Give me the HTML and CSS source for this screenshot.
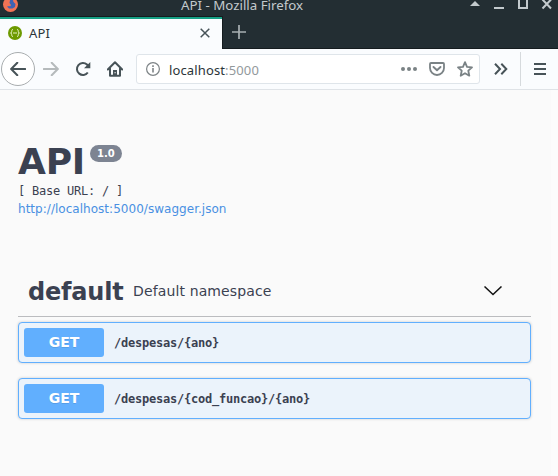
FILE: index.html
```html
<!DOCTYPE html>
<html lang="en">
<head>
<meta charset="utf-8">
<title>API</title>
<link rel="stylesheet" href="styles.css">
</head>
<body>
<div class="window">
  <header class="titlebar">
    <svg class="app-icon" width="16" height="16" viewBox="0 0 16 16"><circle cx="7.500" cy="4.5" r="7.500" fill="#f27355"/><path d="M7 0h3l.5 2 2 2-.5 3-2.500 1.500H6L4 6.500l2.500-.5L8 5 6.500 3z" fill="#3e63b4"/><path d="M5 5h3l-1 1.500z" fill="#f27355"/></svg>
    <span class="window-title">API - Mozilla Firefox</span>
    <svg class="controls" width="88" height="16" viewBox="-2 0 88 16"><path d="M-2 6l5-5 5 5z" fill="#c3cacd"/><path d="M22 8h10" stroke="#c3cacd" stroke-width="2"/><path d="M47-1h8v9h-8z" fill="none" stroke="#c3cacd" stroke-width="2"/><path d="M70.500-.5l8.500 9m0-9l-8.500 9" stroke="#c3cacd" stroke-width="2"/></svg>
  </header>
  <nav class="tabs">
    <div class="tab">
      <svg width="14" height="14" viewBox="0 0 14 14"><circle cx="7" cy="7" r="7" fill="#6d9a00"/><path d="M5 3.500q-1.300 0-1.300 1.300v1q0 1.200-1.200 1.200 1.200 0 1.200 1.200v1q0 1.300 1.300 1.300M9 3.500q1.300 0 1.300 1.300v1q0 1.200 1.200 1.200-1.200 0-1.200 1.200v1q0 1.300-1.300 1.300M5 7h4" fill="none" stroke="#e3f0bd" stroke-width="1"/></svg>
      <span>API</span>
      <svg class="close" width="10" height="10" viewBox="0 0 10 10"><path d="M.7.7l8.600 8.600m0-8.600L.7 9.300" stroke="#475358" stroke-width="1.500"/></svg>
    </div>
    <svg class="new-tab" width="14" height="14" viewBox="0 0 14 14"><path d="M7 0v14M0 7h14" stroke="#a8b0b3" stroke-width="1.700"/></svg>
  </nav>
  <div class="toolbar">
    <span class="back"><svg width="16" height="14" viewBox="0 0 16 14"><path d="M15.200 7H1.500M7.300.8L1.200 7l6.100 6.200" fill="none" stroke="#475358" stroke-width="2" stroke-linecap="round"/></svg></span>
    <svg class="forward" width="16" height="14" viewBox="0 0 16 14"><path d="M.8 7h13.700M8.700.8L14.800 7l-6.100 6.200" fill="none" stroke="#b5babc" stroke-width="2" stroke-linecap="round"/></svg>
    <svg class="reload" width="16" height="16" viewBox="0 0 16 16"><path d="M12.800 11.500A6 6 0 1 1 12 3.500L14 5.800" fill="none" stroke="#475358" stroke-width="2"/><path d="M15.300 1v6.300H9z" fill="#475358"/></svg>
    <svg class="home" width="16" height="16" viewBox="0 0 16 16"><path d="M.8 8.500L8 1.300l7.200 7.200M3 7.500v7.300h10V7.500" fill="none" stroke="#475358" stroke-width="2" stroke-linejoin="round" stroke-linecap="round"/><path d="M6 15V9h4v6z" fill="#475358"/><path d="M7.600 11h1v1.300h-1z" fill="#fff"/></svg>
    <div class="urlbar">
      <svg class="info" width="14" height="14" viewBox="0 0 14 14"><circle cx="7" cy="7" r="6.400" fill="none" stroke="#7d8386" stroke-width="1.200"/><path d="M7 6v4.500M7 3.300v1.700" stroke="#7d8386" stroke-width="1.600"/></svg>
      <span class="url">localhost<span class="port">:5000</span></span>
      <svg class="dots" width="16" height="4" viewBox="0 0 16 4"><g fill="#7a8285"><circle cx="2" cy="2" r="2"/><circle cx="8" cy="2" r="2"/><circle cx="14" cy="2" r="2"/></g></svg>
      <svg class="pocket" width="16" height="14" viewBox="0 0 16 14"><path d="M2 1h12q1 0 1 1v4a7 7 0 0 1-14 0V2q0-1 1-1z" fill="none" stroke="#7a8285" stroke-width="1.800"/><path d="M4.500 5L8 8.300 11.500 5" fill="none" stroke="#7a8285" stroke-width="1.900" stroke-linecap="round" stroke-linejoin="round"/></svg>
      <svg class="star" width="16" height="16" viewBox="0 0 16 16"><path d="M8 1.200l2 4.600 5 .5-3.700 3.400 1 5L8 12.200l-4.300 2.500 1-5L1 6.300l5-.5z" fill="none" stroke="#7a8285" stroke-width="1.800" stroke-linejoin="round"/></svg>
    </div>
    <svg class="more" width="14" height="12" viewBox="0 0 14 12"><path d="M1 .8L6 6l-5 5.200M7.300.8l5 5.200-5 5.200" fill="none" stroke="#475358" stroke-width="2"/></svg>
    <span class="divider"></span>
    <svg class="menu" width="12" height="12" viewBox="0 0 12 12"><path d="M0 1h12M0 6h12M0 11h12" stroke="#475358" stroke-width="2"/></svg>
  </div>
  <main class="page">
    <h1 class="title"><span class="name">API</span><span class="version">1.0</span></h1>
    <pre class="base">[ Base URL: / ]</pre>
    <a class="spec">http://localhost:5000/swagger.json</a>
    <h2 class="tag"><span class="tag-name">default</span><small>Default namespace</small>
      <svg width="18" height="10" viewBox="0 0 18 10"><path d="M.5.500L9 8.500l8.500-8" fill="none" stroke="#111" stroke-width="1.500"/></svg>
    </h2>
    <div class="operation"><span class="method">GET</span><span class="path">/despesas/{ano}</span></div>
    <div class="operation"><span class="method">GET</span><span class="path">/despesas/{cod_funcao}/{ano}</span></div>
  </main>
</div>
</body>
</html>
```
FILE: styles.css
```css
* { box-sizing: border-box; }
body { margin: 0; background: #fcfcfc; overflow: hidden; }
svg { display: block; flex: none; }
.window { width: 558px; height: 476px; overflow: hidden; font-family: "Noto Sans", sans-serif; }
.titlebar { display: flex; height: 16px; background: #232e33; }
.app-icon { margin-left: 3px; }
.window-title { width: 124px; margin-left: 162px; font-size: 13.3px; line-height: 10px; color: #c3cacd; white-space: nowrap; }
.controls { margin-left: auto; }
.tabs { display: flex; height: 33px; background: #232e33; border-bottom: 1px solid #151c1f; }
.tab { display: flex; align-items: center; width: 223px; height: 33px; padding: 0 12px 0 8px; background: #fafcfe; border-top: 1px solid #151c1f; border-right: 1px solid #151c1f; box-shadow: inset 0 2px #16a085; font-size: 13px; color: #2b3539; }
.tab span { margin-left: 7px; letter-spacing: .2px; }
.close { margin-left: auto; }
.new-tab { margin: 9px 0 0 9px; }
.toolbar { display: flex; align-items: center; height: 41px; padding-left: 1px; background: #fafcfe; border-bottom: 1px solid #dfe3e7; }
.back { display: flex; align-items: center; justify-content: center; width: 34px; height: 34px; border: 1px solid #a9adaf; border-radius: 50%; background: #fff; }
.forward { margin-left: 8px; }
.reload { margin-left: 16px; }
.home { margin-left: 16px; }
.urlbar { display: flex; align-items: center; width: 344px; height: 30px; margin-left: 13px; padding-left: 9px; background: #fff; border: 1px solid #dfe5ea; border-radius: 3px; }
.url { width: 92px; margin-left: 9px; padding-top: 1px; font-size: 13px; letter-spacing: .13px; color: #2b3539; white-space: nowrap; }
.port { color: #92999c; }
.dots { margin-left: 140px; }
.pocket { margin-left: 12px; }
.star { margin-left: 12px; }
.more { margin-left: 14px; }
.divider { width: 1px; height: 34px; margin-left: 12px; background: #d6dadd; }
.menu { margin-left: 13px; }
.page { width: 551px; height: 386px; padding: 50px 20px 0 18px; background: #fafafa; color: #3b4151; font-family: "DejaVu Sans", sans-serif; }
.title { display: flex; align-items: flex-start; height: 43px; margin: 0; font-size: 36px; line-height: 43px; }
.name { letter-spacing: -.2px; }
.version { height: 17px; margin: 5px 0 0 5px; padding: 0 7px; border-radius: 9px; background: #7d8492; color: #fff; font-size: 10px; line-height: 17px; }
.base { height: 16px; margin: 0; font: 12px/16px "DejaVu Sans Mono", monospace; letter-spacing: -.224px; }
.spec { display: block; height: 18px; padding-top: 1px; color: #4990e2; font-size: 12px; line-height: 18px; letter-spacing: .03px; }
.tag { display: flex; align-items: center; height: 50px; margin: 50px 0 5px; padding: 0 29px 0 10px; border-bottom: 1px solid #bbbcbf; font-size: 24px; line-height: 30px; }
.tag-name { letter-spacing: -.2px; }
.tag small { margin: -2px 0 0 9.5px; font-size: 14px; font-weight: 400; letter-spacing: .13px; }
.tag svg { margin: -2px 0 0 auto; }
.operation { display: flex; align-items: center; height: 41px; margin-bottom: 15px; padding: 0 5px; background: #ebf3fb; border: 1px solid #61affe; border-radius: 4px; box-shadow: 0 0 3px rgba(0, 0, 0, .19); }
.method { width: 80px; height: 29px; border-radius: 3px; background: #61affe; color: #fff; font-size: 14px; font-weight: 700; line-height: 29px; text-align: center; text-shadow: 0 1px 0 rgba(0, 0, 0, .1); }
.path { margin-left: 10px; font: 700 12px "DejaVu Sans Mono", monospace; letter-spacing: -.224px; }
```
